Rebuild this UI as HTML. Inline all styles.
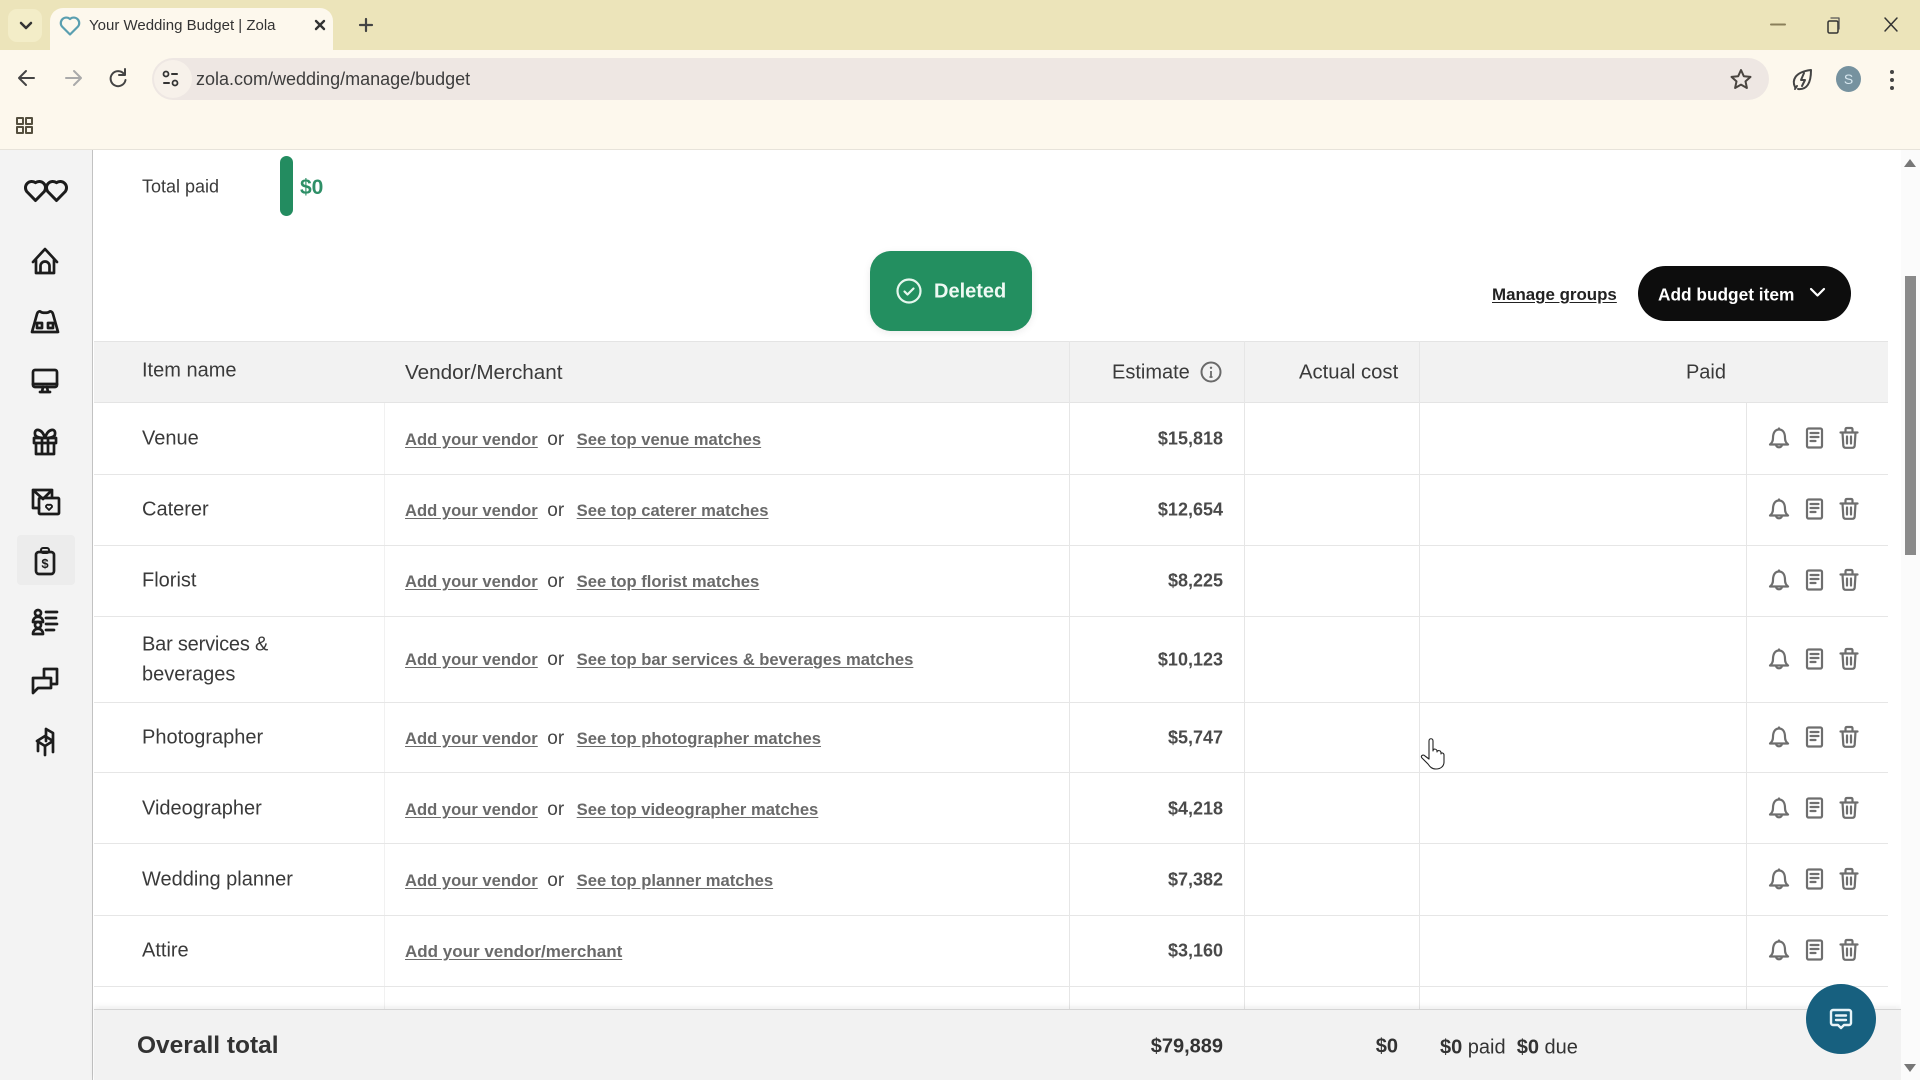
<!DOCTYPE html>
<html lang="en"><head><meta charset="utf-8"><title>Your Wedding Budget | Zola</title>
<style>
html,body{margin:0;padding:0;width:1920px;height:1080px;overflow:hidden;background:#fff;font-family:"Liberation Sans",sans-serif;color:#333}
.a{position:absolute;white-space:nowrap}
.box{position:absolute}
.n{left:142px;font-size:20px;color:#3a3a3a;transform:translateY(calc(-50% + 1px))}
.v{left:405px;font-size:16.600px;transform:translateY(calc(-50% + 1px));color:#444}
.v u{font-weight:bold;color:#6a6a6a;text-underline-offset:2px}
.v i{font-style:normal;font-size:19px;margin:0 12.500px 0 9.500px;color:#444}
.e{right:697px;font-size:18px;color:#4a4a4a;font-weight:bold;transform:translateY(calc(-50% + 1px))}
.h{font-size:20px;color:#3a3a3a;transform:translateY(calc(-50% + 1px))}
.ln{position:absolute;background:#e6e6e6}
svg{position:absolute;overflow:visible}
</style></head><body>
<svg width="0" height="0" style="position:absolute"><defs>
<g id="acts" fill="none" stroke="#6e6e6e" stroke-width="2.200" stroke-linejoin="round" stroke-linecap="round">
<path d="M-9 6.500c2-1.500 3-3 3-6.500 0-5 2-8.500 6-8.500s6 3.500 6 8.500c0 3.500 1 5 3 6.500zM-3 7c.5 3 5.500 3 6 0M0-8.500v-1"/>
<rect x="28" y="-9.500" width="15" height="19" rx="1.500"/><path d="M31.500-5h8M31.500-1h8M31.500 3h5"/>
<path d="M61.500-5.500h17M63.500-5.500l.8 13c.1 1.500 1 2.300 2.500 2.300h6.400c1.500 0 2.400-.8 2.500-2.300l.8-13M66.500-5.500v-3c0-1 .5-1.500 1.500-1.500h4c1 0 1.500.5 1.500 1.500v3M68-1.500v7M72-1.500v7"/>
</g></defs></svg>

<!-- browser chrome -->
<div class="box" style="left:0;top:0;width:1920px;height:50px;background:#ece4ba"></div>
<div class="box" style="left:0;top:50px;width:1920px;height:100px;background:#fdf8ed;border-bottom:1px solid #e7e3da;box-sizing:border-box"></div>
<div class="box" style="left:8px;top:9px;width:34px;height:33px;border-radius:9px;background:#f3edc8"></div>
<div class="box" style="left:50px;top:8px;width:283px;height:44px;background:#fdf8ed;border-radius:13px 13px 0 0"></div>
<svg style="left:0;top:0" width="420" height="150" fill="none" stroke-linecap="round" stroke-linejoin="round">
<path d="M21 23l5 5 5-5" stroke="#333" stroke-width="2.500"/>
<path d="M70 34.500l-8-8a5.500 5.500 0 0 1 8-7.500a5.500 5.500 0 0 1 8 7.500z" stroke="#5a9fb0" stroke-width="2.200"/>
<path d="M316 21l8 8M324 21l-8 8" stroke="#333" stroke-width="2.400"/>
<path d="M366 19v12M360 25h12" stroke="#444" stroke-width="2.200"/>
<path d="M34 78H20M26 71l-7 7 7 7" stroke="#444" stroke-width="2"/>
<path d="M66 78h14M74 71l7 7-7 7" stroke="#aaa" stroke-width="2"/>
<path d="M124 74a7.500 7.500 0 1 0 1.500 6M125 69v6h-6" stroke="#444" stroke-width="2"/>
<path d="M18 120h6v6h-6zM27 120h6v6h-6zM18 129h6v6h-6zM27 129h6v6h-6z" transform="translate(-1 -2)" stroke="#55503f" stroke-width="2"/>
</svg>
<div class="box" style="left:152px;top:58px;width:1617px;height:42px;border-radius:21px;background:#eee7e3"></div>
<div class="box" style="left:154px;top:60px;width:38px;height:38px;border-radius:19px;background:#f7f1ea"></div>
<svg style="left:0;top:0" width="1920" height="150" fill="none" stroke-linecap="round" stroke-linejoin="round">
<circle cx="166" cy="74" r="2.500" stroke="#333" stroke-width="1.800"/><path d="M172 74h5M164 83h5" stroke="#333" stroke-width="2"/><circle cx="175" cy="83" r="2.500" stroke="#333" stroke-width="1.800"/>
<path d="M1741 70l2.800 6.200 6.700.7-5 4.500 1.400 6.600-5.900-3.400-5.900 3.400 1.400-6.600-5-4.500 6.700-.7z" stroke="#4a4540" stroke-width="2"/>
<path d="M1795 87c-3-6-1-15 16-17 0 13-4 20-13 19M1795 89l2-3M1804 73l-3 7h4l-3 6" stroke="#444" stroke-width="2"/>
<path d="M1771 24.500h14" stroke="#8a7f5a" stroke-width="2"/>
<rect x="1828" y="21" width="10" height="12" rx="1.500" stroke="#333" stroke-width="1.500"/><path d="M1831 18h8v11" stroke="#555" stroke-width="1.300"/>
<path d="M1885 18l12 13M1897 18l-12 13" stroke="#333" stroke-width="1.500"/>
</svg>
<div class="box" style="left:1836px;top:66px;width:25px;height:26px;border-radius:50%;background:#76929f;color:#d8e8f0;font-size:14px;line-height:26px;text-align:center">S</div>
<div class="box" style="left:1890px;top:70px;width:4px;height:4px;border-radius:50%;background:#444;box-shadow:0 8px 0 #444,0 16px 0 #444"></div>
<div class="a" style="left:89px;top:17px;font-size:15px;color:#333">Your Wedding Budget | Zola</div>
<div class="a" style="left:196px;top:69px;font-size:18px;color:#3d3d3d">zola.com/wedding/manage/budget</div>

<!-- sidebar -->
<div class="box" style="left:0;top:150px;width:93px;height:930px;background:#f3f3f3;border-right:1.500px solid #c2c2c2;box-sizing:border-box"></div>
<div class="box" style="left:17px;top:535px;width:58px;height:50px;background:#ececec;border-radius:4px"></div>
<svg style="left:0;top:0" width="92" height="800" fill="none" stroke="#1c1c1c" stroke-width="2.700" stroke-linejoin="round" stroke-linecap="round">
<path d="M35.500 200.500l-8.800-9a6.300 6.300 0 0 1 8.800-8.800a6.300 6.300 0 0 1 8.800 8.800z" stroke-width="3"/>
<path d="M56.500 200.500l-8.800-9a6.300 6.300 0 0 1 8.800-8.800a6.300 6.300 0 0 1 8.800 8.800z" stroke-width="3"/>
<path d="M33 262L45 249L57 262M36 259V273H54V259M40.500 273V266a4.500 4.500 0 0 1 9 0V273"/>
<path d="M37 314c1-3 3-3 4-2s7 1 8 0 3-1 4 2L58 332H32ZM37 323h5v5h-5zM48 323h5v5h-5z"/>
<rect x="33" y="370" width="24" height="17" rx="2"/><path d="M33 384h24M40 392h10M43 387l-1 5M47 387l1 5"/>
<path d="M34 438h22v5H34zM36 443v11h18v-11M42 438v16M48 438v16M45 438c-3-10-11-10-10-4 0 3 5 4 10 4 5 0 10-1 10-4 1-6-7-6-10 4"/>
<path d="M39 508H33V490H52V497M33 490L43 499L52 490"/><rect x="39" y="498" width="20" height="16" rx="1"/><path d="M49 510l-3-3a2 2 0 0 1 3-2a2 2 0 0 1 3 2z" stroke-width="1.800"/>
<rect x="36" y="552" width="18" height="22" rx="3"/><rect x="41" y="548" width="8" height="5" rx="2" stroke-width="2"/>
<circle cx="38" cy="613" r="3"/><path d="M33 622c0-7 10-7 10 0zM46 612h11M46 618h10M46 624h11M46 630h8"/><circle cx="38" cy="625" r="3" fill="#f3f3f3"/><path d="M33 634c0-7 10-7 10 0z" fill="#f3f3f3"/>
<path d="M44 677V669H57V684H52M33 678H51V688H38L33 693Z"/>
<path d="M46 729L53 733V752M46 729V741M37 741L45 736L53 741L45 746ZM38 741V751M45 746V755"/>
<text x="45" y="568" font-family="Liberation Sans" font-weight="bold" font-size="13" text-anchor="middle" fill="#1c1c1c" stroke="none">$</text>
</svg>

<!-- summary -->
<div class="a" style="left:142px;top:187px;font-size:18px;color:#3a3a3a;transform:translateY(-50%)">Total paid</div>
<div class="box" style="left:280px;top:156px;width:13px;height:60px;border-radius:7px;background:#238c60"></div>
<div class="a" style="left:300px;top:188px;font-size:21px;font-weight:bold;color:#2e8f67;transform:translateY(-50%)">$0</div>

<div class="a" style="left:1492px;top:295px;font-size:16.900px;font-weight:bold;color:#222;text-decoration:underline;transform:translateY(-50%);text-underline-offset:2px">Manage groups</div>
<div class="box" style="left:1638px;top:266px;width:213px;height:55px;border-radius:28px;background:#0d0d0d"></div>
<div class="a" style="left:1658px;top:295px;font-size:17.300px;font-weight:bold;color:#fff;transform:translateY(-50%)">Add budget item</div>
<svg style="left:0;top:0" width="1920" height="400" fill="none"><path d="M1811 289l6.500 6.500 6.500-6.500" stroke="#fff" stroke-width="2.200" stroke-linecap="round" stroke-linejoin="round"/></svg>

<!-- table -->
<div class="box" style="left:94px;top:341px;width:1794px;height:62px;background:#f2f2f2;border-top:1px solid #e4e4e4;border-bottom:1px solid #e4e4e4;box-sizing:border-box"></div>
<div class="ln" style="left:384px;top:403px;width:1px;height:606px;background:#f1f1f1"></div>
<div class="ln" style="left:1069px;top:341px;width:1px;height:668px"></div>
<div class="ln" style="left:1244px;top:341px;width:1px;height:668px"></div>
<div class="ln" style="left:1419px;top:341px;width:1px;height:668px"></div>
<div class="ln" style="left:1746px;top:403px;width:1px;height:606px"></div>
<div class="ln" style="left:94px;top:474px;width:1794px;height:1px"></div>
<div class="ln" style="left:94px;top:545px;width:1794px;height:1px"></div>
<div class="ln" style="left:94px;top:616px;width:1794px;height:1px"></div>
<div class="ln" style="left:94px;top:702px;width:1794px;height:1px"></div>
<div class="ln" style="left:94px;top:772px;width:1794px;height:1px"></div>
<div class="ln" style="left:94px;top:843px;width:1794px;height:1px"></div>
<div class="ln" style="left:94px;top:915px;width:1794px;height:1px"></div>
<div class="ln" style="left:94px;top:986px;width:1794px;height:1px"></div>

<div class="a h" style="left:142px;top:370px">Item name</div>
<div class="a h" style="left:405px;top:372px;font-size:20.700px">Vendor/Merchant</div>
<div class="a h" style="left:1112px;top:372px">Estimate</div>
<svg style="left:1200px;top:361px" width="22" height="22" fill="none"><circle cx="11" cy="11" r="9.500" stroke="#6a6a6a" stroke-width="2"/><path d="M11 10v6M9.500 16h3" stroke="#6a6a6a" stroke-width="1.800"/><circle cx="11" cy="6.800" r="1.200" fill="#6a6a6a"/></svg>
<div class="a h" style="left:1299px;top:372px;font-size:20.300px">Actual cost</div>
<div class="a h" style="right:194px;top:372px">Paid</div>

<div class="a n" style="top:438px">Venue</div>
<div class="a v" style="top:439px"><u>Add your vendor</u><i>or</i><u>See top venue matches</u></div>
<div class="a e" style="top:438px">$15,818</div>
<svg style="left:1779px;top:438px" width="1" height="1"><use href="#acts"/></svg>

<div class="a n" style="top:509px">Caterer</div>
<div class="a v" style="top:510px"><u>Add your vendor</u><i>or</i><u>See top caterer matches</u></div>
<div class="a e" style="top:509px">$12,654</div>
<svg style="left:1779px;top:509px" width="1" height="1"><use href="#acts"/></svg>

<div class="a n" style="top:580px">Florist</div>
<div class="a v" style="top:581px"><u>Add your vendor</u><i>or</i><u>See top florist matches</u></div>
<div class="a e" style="top:580px">$8,225</div>
<svg style="left:1779px;top:580px" width="1" height="1"><use href="#acts"/></svg>

<div class="a n" style="top:644px;letter-spacing:-.2px">Bar services &amp;</div>
<div class="a n" style="top:674px">beverages</div>
<div class="a v" style="top:659px"><u>Add your vendor</u><i>or</i><u>See top bar services &amp; beverages matches</u></div>
<div class="a e" style="top:659px">$10,123</div>
<svg style="left:1779px;top:659px" width="1" height="1"><use href="#acts"/></svg>

<div class="a n" style="top:737px">Photographer</div>
<div class="a v" style="top:738px"><u>Add your vendor</u><i>or</i><u>See top photographer matches</u></div>
<div class="a e" style="top:737px">$5,747</div>
<svg style="left:1779px;top:737px" width="1" height="1"><use href="#acts"/></svg>

<div class="a n" style="top:808px">Videographer</div>
<div class="a v" style="top:809px"><u>Add your vendor</u><i>or</i><u>See top videographer matches</u></div>
<div class="a e" style="top:808px">$4,218</div>
<svg style="left:1779px;top:808px" width="1" height="1"><use href="#acts"/></svg>

<div class="a n" style="top:879px">Wedding planner</div>
<div class="a v" style="top:880px"><u>Add your vendor</u><i>or</i><u>See top planner matches</u></div>
<div class="a e" style="top:879px">$7,382</div>
<svg style="left:1779px;top:879px" width="1" height="1"><use href="#acts"/></svg>

<div class="a n" style="top:950px">Attire</div>
<div class="a v" style="top:951px;font-size:17px"><u>Add your vendor/merchant</u></div>
<div class="a e" style="top:950px">$3,160</div>
<svg style="left:1779px;top:950px" width="1" height="1"><use href="#acts"/></svg>

<!-- toast -->
<div class="box" style="left:870px;top:251px;width:162px;height:80px;border-radius:21px;background:#238f60;box-shadow:0 2px 8px rgba(0,0,0,.08)"></div>
<svg style="left:896px;top:278px" width="26" height="26" fill="none"><circle cx="13" cy="13" r="11.500" stroke="#e6f7ee" stroke-width="2.200"/><path d="M8.500 13.500l3 3 6-6" stroke="#e6f7ee" stroke-width="2.200" stroke-linecap="round" stroke-linejoin="round"/></svg>
<div class="a" style="left:934px;top:292px;font-size:20px;font-weight:bold;color:#eef9f3;transform:translateY(-50%)">Deleted</div>

<!-- footer -->
<div class="box" style="left:94px;top:1009px;width:1807px;height:71px;background:#f2f2f2;border-top:1.500px solid #d4d4d4;box-sizing:border-box;box-shadow:0 -3px 5px rgba(0,0,0,.06)"></div>
<div class="a" style="left:137px;top:1046px;font-size:24.500px;font-weight:bold;color:#333;transform:translateY(-50%)">Overall total</div>
<div class="a e" style="top:1046px;right:697px;color:#333;font-size:20px">$79,889</div>
<div class="a e" style="top:1046px;right:522px;color:#333;font-size:20px">$0</div>
<div class="a" style="left:1440px;top:1048px;font-size:20px;color:#333;transform:translateY(-50%)"><b>$0</b> paid&nbsp; <b>$0</b> due</div>

<!-- chat -->
<div class="box" style="left:1806px;top:984px;width:70px;height:70px;border-radius:50%;background:#17607f"></div>
<svg style="left:1830px;top:1010px" width="22" height="21" fill="none" stroke="#e8f4f8" stroke-width="2.400" stroke-linejoin="round" stroke-linecap="round"><path d="M3 0h16a2 2 0 0 1 2 2v11a2 2 0 0 1-2 2h-5l-3 3-3-3H3a2 2 0 0 1-2-2V2a2 2 0 0 1 2-2zM6 5.500h10M6 10h10"/></svg>

<!-- scrollbar -->
<div class="box" style="left:1901px;top:150px;width:19px;height:930px;background:#fbfbfb"></div>
<div class="box" style="left:1905px;top:276px;width:11px;height:279px;background:#8a8a8a"></div>
<svg style="left:0;top:0" width="1920" height="1080"><path d="M1904 167l6-8 6 8z" fill="#777"/><path d="M1904 1064l6 8 6-8z" fill="#777"/>
<path d="M1429 741c0-3 4-3 4 0v10c0-3 4-2 4 0v1c0-2 4-2 4 1v1c0-2 3-1 3 1v7c0 4-3 7-8 7-4 0-6-2-8-5l-6-6c-2-2 1-4 3-2l4 3z" fill="#fff" stroke="#222" stroke-width="1.100" stroke-linejoin="round"/></svg>
</body></html>
